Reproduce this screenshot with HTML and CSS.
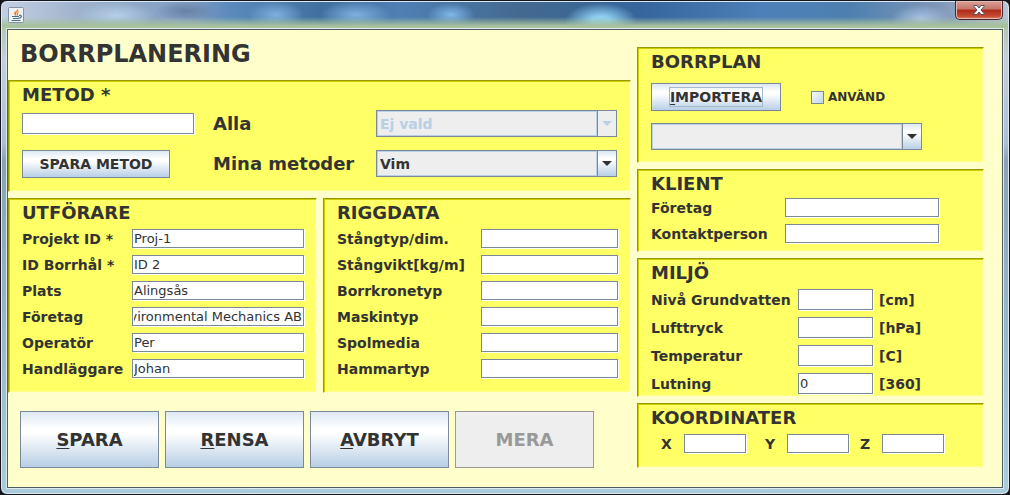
FILE: index.html
```html
<!DOCTYPE html>
<html lang="sv">
<head>
<meta charset="utf-8">
<title>Borrplanering</title>
<link rel="stylesheet" href="styles.css">
</head>
<body>
<div class="window">
  <header class="titlebar">
    <svg class="java-icon" viewBox="0 0 16 16" width="16" height="16" aria-hidden="true">
      <rect x=".5" y=".5" width="15" height="15" rx="1" fill="#eef2f5" stroke="#8293a3"/>
      <path d="M9.500 2C10 4 6 4.500 6.200 6.500C6.500 7.500 7.500 8 7.500 9C9 7.500 7.500 7 8 6C8.500 5 11 4 9.500 2ZM11 4.500C8.500 6 8.500 6.500 9.200 7.500C9.500 8 9.500 8.500 8.500 9C11.500 7.500 9.800 7 9.500 6.300Z" fill="#ee7a12" stroke="#ee7a12" stroke-width=".3"/>
      <path d="M4 9.500H11M11 8.500C14.500 7.500 14 11 10.500 11.200M5 11.500H10.500M3.500 13.500H12.500" fill="none" stroke="#4c7089" stroke-width="1.200"/>
    </svg>
    <button class="close" type="button" aria-label="Stäng">
      <svg viewBox="0 0 12 10" width="12" height="10" aria-hidden="true">
        <path d="M1 .5H4L6 3L8 .5H11V1.500L8 5L11 8.500V9.500H8L6 7L4 9.500H1V8.500L4 5L1 1.500Z" fill="#fff" stroke="#4d4f60"/>
      </svg>
    </button>
  </header>

  <main class="client">
    <div class="column-left">
      <h1 class="page-title">BORRPLANERING</h1>

      <section class="panel panel-method">
        <h2 class="panel-title"><label for="metod">METOD *</label></h2>
        <div class="method-grid">
          <input class="field field-tall" id="metod" type="text">
          <label class="label-large" for="alla">Alla</label>
          <span class="combo combo-disabled">
            <select id="alla" disabled><option>Ej vald</option></select>
            <span class="combo-arrow"><svg viewBox="0 0 10 5" width="10" height="5"><path d="M0 0H10L5 5Z" fill="currentColor"/></svg></span>
          </span>
          <button class="button button-method" type="button">SPARA METOD</button>
          <label class="label-large" for="mina">Mina metoder</label>
          <span class="combo">
            <select id="mina"><option>Vim</option></select>
            <span class="combo-arrow"><svg viewBox="0 0 10 5" width="10" height="5"><path d="M0 0H10L5 5Z" fill="currentColor"/></svg></span>
          </span>
        </div>
      </section>

      <div class="panel-pair">
        <section class="panel">
          <h2 class="panel-title">UTFÖRARE</h2>
          <div class="form form-executor">
            <label for="projekt">Projekt ID *</label><input class="field" id="projekt" type="text" value="Proj-1">
            <label for="borrhal">ID Borrhål *</label><input class="field" id="borrhal" type="text" value="ID 2">
            <label for="plats">Plats</label><input class="field" id="plats" type="text" value="Alingsås">
            <label for="foretag">Företag</label><input class="field field-end" id="foretag" type="text" value="Environmental Mechanics AB">
            <label for="operator">Operatör</label><input class="field" id="operator" type="text" value="Per">
            <label for="handlaggare">Handläggare</label><input class="field" id="handlaggare" type="text" value="Johan">
          </div>
        </section>
        <section class="panel">
          <h2 class="panel-title">RIGGDATA</h2>
          <div class="form form-rig">
            <label for="stangtyp">Stångtyp/dim.</label><input class="field" id="stangtyp" type="text">
            <label for="stangvikt">Stångvikt[kg/m]</label><input class="field" id="stangvikt" type="text">
            <label for="krona">Borrkronetyp</label><input class="field" id="krona" type="text">
            <label for="maskin">Maskintyp</label><input class="field" id="maskin" type="text">
            <label for="spol">Spolmedia</label><input class="field" id="spol" type="text">
            <label for="hammar">Hammartyp</label><input class="field" id="hammar" type="text">
          </div>
        </section>
      </div>

      <div class="actions">
        <button class="button button-large" type="button"><u>S</u>PARA</button>
        <button class="button button-large" type="button"><u>R</u>ENSA</button>
        <button class="button button-large" type="button"><u>A</u>VBRYT</button>
        <button class="button button-large" type="button" disabled>MERA</button>
      </div>
    </div>

    <div class="column-right">
      <section class="panel panel-plan">
        <h2 class="panel-title">BORRPLAN</h2>
        <div class="import-row">
          <button class="button button-import" type="button"><span class="focus-ring"><u>I</u>MPORTERA</span></button>
          <label class="check"><input type="checkbox">ANVÄND</label>
        </div>
        <span class="combo combo-plan">
          <select aria-label="Borrplan"><option></option></select>
          <span class="combo-arrow"><svg viewBox="0 0 10 5" width="10" height="5"><path d="M0 0H10L5 5Z" fill="currentColor"/></svg></span>
        </span>
      </section>

      <section class="panel panel-client">
        <h2 class="panel-title">KLIENT</h2>
        <div class="form form-client">
          <label for="kforetag">Företag</label><input class="field" id="kforetag" type="text">
          <label for="kontakt">Kontaktperson</label><input class="field" id="kontakt" type="text">
        </div>
      </section>

      <section class="panel panel-env">
        <h2 class="panel-title">MILJÖ</h2>
        <div class="form form-env">
          <label for="niva">Nivå Grundvatten</label><input class="field field-tall" id="niva" type="text"><span>[cm]</span>
          <label for="luft">Lufttryck</label><input class="field field-tall" id="luft" type="text"><span>[hPa]</span>
          <label for="temp">Temperatur</label><input class="field field-tall" id="temp" type="text"><span>[C]</span>
          <label for="lutning">Lutning</label><input class="field field-tall" id="lutning" type="text" value="0"><span>[360]</span>
        </div>
      </section>

      <section class="panel panel-coords">
        <h2 class="panel-title">KOORDINATER</h2>
        <div class="coords">
          <label for="x">X</label><input class="field" id="x" type="text">
          <label for="y">Y</label><input class="field" id="y" type="text">
          <label for="z">Z</label><input class="field" id="z" type="text">
        </div>
      </section>
    </div>
  </main>
</div>
</body>
</html>
```

FILE: styles.css
```css
* {
  box-sizing: border-box;
}

body {
  margin: 0;
  background: #14161c;
  color: #333;
  font: bold 14px/18px Verdana, "DejaVu Sans", sans-serif;
}

input,
select,
button {
  margin: 0;
  color: inherit;
  font: inherit;
}

/* Window frame */
.window {
  display: flex;
  flex-direction: column;
  min-height: 100vh;
  padding: 0 6px 6px;
  border: 1px solid #14161c;
  border-radius: 7px;
  background:
    linear-gradient(transparent 16px, #a6c19c 25px, #b4c8a4 29px) 0 0 / 100% 29px no-repeat,
    radial-gradient(ellipse 36px 18px at 600px 20px, #8fd0f4 25%, transparent),
    radial-gradient(ellipse 28px 14px at 275px 14px, #7fb0de, transparent),
    radial-gradient(ellipse 36px 14px at 355px 14px, #7fb0de, transparent),
    radial-gradient(ellipse 24px 12px at 450px 14px, #80b8ea, transparent),
    radial-gradient(ellipse 40px 14px at 115px 15px, #b4cfe8, transparent),
    radial-gradient(ellipse 30px 10px at 185px 10px, #6681a4, transparent),
    radial-gradient(ellipse 30px 14px at 920px 18px, #a9c4e4, transparent),
    linear-gradient(90deg, #c3d0e2, #9fb2cc 80px, #7f9cc2 190px, #5a89bd 230px, #41709f 320px, #4f7fb4 400px, #43698f 520px, #35659c 640px, #4d80b8 760px, #4d80b0 850px, #8198b8 940px, #b8c6d8) 0 0 / 100% 29px no-repeat,
    linear-gradient(#b4c8b8 29px, #c5cfdb 60px, #a9bed8 142px, #87a3b4 160px, #a9cbdb 100%);
  box-shadow: inset 0 0 0 1px #dce9f2;
}

.titlebar {
  display: flex;
  align-items: flex-start;
  justify-content: space-between;
  height: 28px;
}

.java-icon {
  flex: none;
  margin: 6px 0 0 1px;
}

.close {
  display: grid;
  place-items: center;
  width: 48px;
  height: 19px;
  padding: 0;
  border: 1px solid #48252d;
  border-top: 0;
  border-radius: 0 0 5px 5px;
  background: linear-gradient(#d9a299, #c87368 45%, #ad2b18 50%, #c54c32 85%, #e08a68);
  box-shadow: inset 0 0 0 1px #e5b8b0;
}

.client {
  display: grid;
  flex: 1;
  grid-template-columns: 623fr 347fr;
  align-items: start;
  gap: 6px;
  padding-right: 18px;
  border: 1px solid #4d5a5e;
  background: #ffffcc;
  box-shadow: 0 0 0 1px #dfebee;
}

.column-left,
.column-right {
  display: flex;
  flex-direction: column;
  gap: 6px;
}

.column-right {
  padding-top: 17px;
}

.page-title {
  height: 44px;
  margin: 0;
  padding: 8px 12px;
  font-size: 24px;
  line-height: 32px;
}

/* Sunken panels */
.panel {
  padding: 3px 12px 0 13px;
  border: 1px solid;
  border-color: #999900 #ffffcc #ffffcc #999900;
  background: #ffff66;
  box-shadow: inset 1px 1px 0 #cccc00, inset -1px -1px 0 #ffff8c;
}

.panel-title {
  margin: 0;
  font-size: 18px;
  line-height: 22px;
}

.panel-method {
  min-height: 112px;
}

.method-grid {
  display: grid;
  grid-template-columns: 172px 144px 1fr;
  grid-auto-rows: 27px;
  align-items: center;
  gap: 13px 19px;
  margin-top: 4px;
  padding-right: 1px;
}

.label-large {
  font-size: 18px;
  line-height: 24px;
}

.panel-pair {
  display: grid;
  grid-template-columns: 309fr 308fr;
  gap: 6px;
}

.panel-pair .panel {
  min-height: 195px;
}

/* Form rows */
.form {
  display: grid;
  grid-auto-rows: 19px;
  align-items: center;
  row-gap: 7px;
  margin-top: 5px;
}

.form-executor {
  grid-template-columns: 110px 1fr;
}

.form-rig {
  grid-template-columns: 144px 1fr;
}

.form-client {
  grid-template-columns: 134px 154px;
  margin-top: 3px;
}

.form-env {
  grid-template-columns: 147px 75px auto;
  grid-auto-rows: 21px;
}

.form-env span {
  padding-left: 6px;
}

.field {
  width: 100%;
  min-width: 0;
  height: 19px;
  padding: 0 1px;
  border: 1px solid #7a8a99;
  border-radius: 0;
  background: #fff;
  box-shadow: 1px 1px 0 #fff;
  font-size: 13px;
  font-weight: normal;
}

.field-tall {
  height: 21px;
}

.field-end {
  direction: rtl;
}

/* Combo boxes */
.combo {
  display: grid;
  grid-template-columns: 1fr 19px;
  height: 27px;
  border: 1px solid #7a8a99;
}

.combo select {
  grid-area: 1 / 1 / 2 / 3;
  padding: 0 2px;
  border: 1px solid #b8cfe5;
  border-radius: 0;
  background: #eee;
  appearance: none;
}

.combo-arrow {
  display: grid;
  grid-area: 1 / 2;
  z-index: 1;
  place-items: center;
  border-left: 1px solid #7a8a99;
  background: linear-gradient(#dde8f3, #fff 30%, #fff 38%, #b8cfe5);
  box-shadow: -1px 0 0 #b8cfe5;
  pointer-events: none;
}

.combo-disabled,
.combo-disabled select {
  color: #b8cfe5;
  opacity: 1;
}

.combo-disabled .combo-arrow {
  background: #eee;
}

/* Buttons */
.button {
  padding: 0;
  border: 1px solid #7a8a99;
  border-radius: 0;
  background: linear-gradient(#dde8f3, #fff 30%, #fff 38%, #b8cfe5);
}

.button:disabled {
  border-color: #999;
  background: #eee;
  color: #999;
}

.button u {
  text-underline-offset: 2px;
  text-decoration-thickness: 1px;
}

.button-method {
  width: 148px;
  height: 28px;
}

.button-import {
  width: 130px;
  height: 28px;
}

.focus-ring {
  display: inline-block;
  outline: 1px solid #a3b8cc;
}

.actions {
  display: grid;
  grid-template-columns: repeat(4, 139px);
  gap: 6px;
  padding: 12px;
}

.button-large {
  height: 57px;
  font-size: 18px;
}

.panel-plan {
  min-height: 116px;
}

.import-row {
  display: flex;
  align-items: center;
  gap: 30px;
  margin-top: 10px;
}

.check {
  display: flex;
  align-items: center;
  gap: 4px;
  font-size: 12px;
}

.check input {
  width: 13px;
  height: 13px;
  border: 1px solid #7a8a99;
  background: linear-gradient(135deg, #f5f9fc, #c3d6e9);
  appearance: none;
}

.check input:checked {
  background: #333;
}

.combo-plan {
  width: 271px;
  margin-top: 12px;
}

.panel-client {
  min-height: 83px;
}

.panel-env {
  min-height: 139px;
}

.panel-coords {
  min-height: 65px;
}

.coords {
  display: grid;
  grid-template-columns: 23px 62px 41px 62px 33px 62px;
  align-items: center;
  justify-content: start;
  margin-top: 5px;
  padding-left: 10px;
}

.coords .field + label {
  justify-self: end;
  width: 22px;
}
```
